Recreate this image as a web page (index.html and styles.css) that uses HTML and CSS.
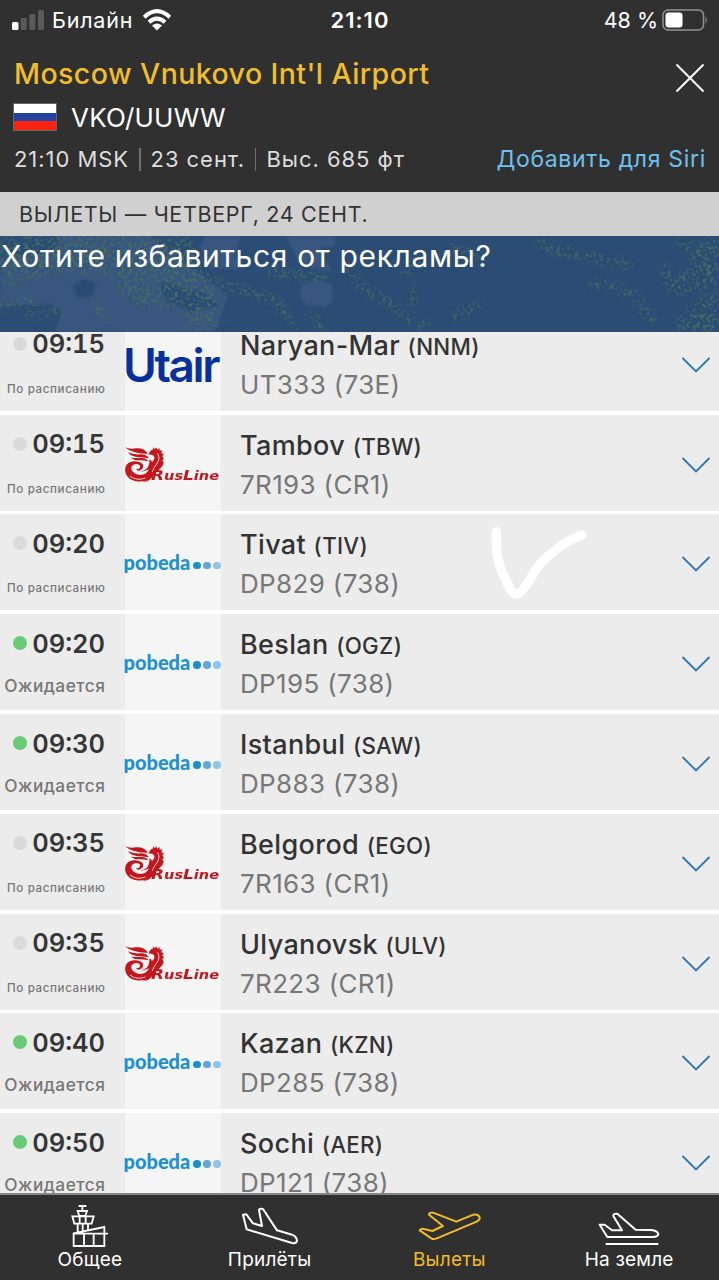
FILE: index.html
```html
<!DOCTYPE html>
<html lang="ru">
<head>
<meta charset="utf-8">
<title>Moscow Vnukovo Int'l Airport</title>
<link rel="stylesheet" href="styles.css">
</head>
<body>
<svg class="defs" width="0" height="0" aria-hidden="true">
  <symbol id="chevron" viewBox="0 0 30 18"><path d="M1.500 2L15 15.500L28.500 2" fill="none" stroke="#2d77b5" stroke-width="1.900"/></symbol>
  <symbol id="bird" viewBox="12 34 126 110">
    <path fill="#c4161c" d="M15 38Q28 44 48 41Q70 38 84 57Q60 58 42 52Q24 47 15 38ZM24 53Q40 61 62 59Q78 58 87 71Q68 68 50 67Q32 65 24 53ZM32 69Q52 71 66 70Q80 71 86 80Q68 76 56 77Q42 77 32 69Z"/>
    <path fill="#c4161c" d="M46 80C22 78 10 98 18 118C28 142 64 146 90 134Q78 140 66 143C86 142 98 132 102 116C116 106 128 98 131 84L127 76L132 73L127 64L132 60L124 55L127 47L119 48L119 40L112 45L109 38L105 43L98 38L100 44Q88 48 86 60Q92 58 99 62C106 68 104 76 96 82C94 78 92 74 88 76C90 96 78 108 62 110Q74 112 86 104C82 120 60 126 44 116C28 106 32 90 48 88Q62 88 60 98Q58 106 48 102Q52 112 62 106C76 98 72 82 46 80Z"/>
    <path fill="none" stroke="#f5f5f5" stroke-width="2.500" d="M113 56Q122 72 110 88T97 112M30 124Q50 140 76 130"/>
  </symbol>
</svg>

<div class="statusbar">
  <div class="carrier">
    <svg class="signal" width="34" height="20" viewBox="0 0 34 20"><rect x="0" y="12" width="6.500" height="8" rx="1.500" fill="#fff"/><g fill="#5a5a5a"><rect x="8.700" y="8" width="6" height="12" rx="1.500"/><rect x="17.300" y="4" width="6" height="16" rx="1.500"/><rect x="26" y="0" width="6" height="20" rx="1.500"/></g></svg>
    <span class="carrier-name">Билайн</span>
    <svg class="wifi" width="30" height="22" viewBox="0 0 30 22"><g fill="none" stroke="#fff" stroke-width="4"><path d="M2.200 8.200Q15-3.800 27.800 8.200"/><path d="M7 13.200Q15 6 23 13.200"/></g><path d="M15 21.500L10 16.600Q15 12.500 20 16.600Z" fill="#fff"/></svg>
  </div>
  <span class="clock">21:10</span>
  <div class="battery"><span class="percent">48 %</span><svg width="46" height="22" viewBox="0 0 46 22"><rect x="1" y="1" width="40.500" height="20" rx="5" fill="none" stroke="#929292" stroke-width="1.500"/><rect x="3.500" y="3.500" width="17" height="15" rx="3" fill="#fff"/><path d="M43.600 7Q46 11 43.600 15Z" fill="#929292"/></svg></div>
</div>

<header class="header">
  <div class="title-row"><h1 class="title">Moscow Vnukovo Int'l Airport</h1>
    <svg class="close" width="30" height="30" viewBox="0 0 30 30"><path d="M1.500 1.500L28.500 28.500M28.500 1.500L1.500 28.500" stroke="#fff" stroke-width="2"/></svg></div>
  <div class="code-row"><span class="flag"></span><span class="codes">VKO/UUWW</span></div>
  <div class="info-row"><span>21:10 MSK</span><i class="bar"></i><span>23 сент.</span><i class="bar"></i><span>Выс. 685 фт</span><a class="siri">Добавить для Siri</a></div>
</header>

<div class="section">ВЫЛЕТЫ — ЧЕТВЕРГ, 24 СЕНТ.</div>

<div class="banner">
  <svg class="map" width="719" height="96" viewBox="0 0 719 96">
    <defs>
      <filter id="specks" x="0" y="0" width="719" height="96" filterUnits="userSpaceOnUse" color-interpolation-filters="sRGB">
        <feTurbulence type="fractalNoise" baseFrequency="0.28" numOctaves="2" seed="7" result="n"/>
        <feColorMatrix in="n" type="matrix" values="0 0 0 0 0.260 0 0 0 0 0.420 0 0 0 0 0.380 7 0 0 0 -3.500" result="s"/>
        <feGaussianBlur in="SourceGraphic" stdDeviation="3.500" result="m"/>
        <feComposite in="s" in2="m" operator="in" result="c"/>
        <feGaussianBlur in="c" stdDeviation="0.400"/>
      </filter>
      <filter id="soft"><feGaussianBlur stdDeviation="1"/></filter>
    </defs>
    <rect width="719" height="96" fill="#2b4c75"/>
    <g fill="#37577f" filter="url(#soft)">
      <path d="M0 0H150L190 30L228 60L215 96H55L62 75L50 68L0 70Z"/>
      <path d="M205 0H240L235 20L245 34L210 32L200 10ZM286 0H335V10L320 12L325 25L334 36L300 28Z"/>
      <path d="M302 48L318 44L332 48L333 64L326 71L306 69L300 60Z"/>
    </g>
    <g fill="#2b4c75" filter="url(#soft)"><path d="M0 0H60L50 18L0 22ZM72 50L85 42L96 48L92 60L78 62Z"/><path d="M160 46L200 56L220 70L190 76L165 64Z"/></g>
    <g filter="url(#specks)" fill="#000" stroke="#000" stroke-linejoin="round" stroke-linecap="round">
      <path stroke="none" d="M0 0H190L200 30L218 48L222 90L190 96L180 70L140 72L120 56L110 40L60 36L20 50L0 48Z"/>
      <path fill="none" stroke-width="9" d="M120 25L180 35L230 50L275 64L295 92M270 36L325 42M0 68L35 64L30 80M45 80L60 76M95 70L108 82M350 34L362 52L395 70L405 82L425 90M310 78L325 95M440 22L455 12L480 20M405 36L420 22M415 52L412 65M455 80L478 70M540 6L560 16L582 18L605 26L628 28M590 46L615 52L638 60L645 76L655 84M680 6L695 15M665 30L670 50"/>
      <path stroke="none" d="M688 10L719 0V96H674L680 78L700 62L719 54V48L675 60L668 45L695 30Z"/>
    </g>
  </svg>
  <span class="banner-text">Хотите избавиться от рекламы?</span>
</div>

<main class="list">
  <article class="row"><div class="when"><div class="time"><i class="dot"></i><span>09:15</span></div><div class="st small">По расписанию</div></div><div class="logo"><span class="utair">Utair</span></div><div class="dest"><div class="name">Naryan-Mar <small>(NNM)</small></div><div class="flight">UT333 (73E)</div></div><svg class="chev"><use href="#chevron"/></svg></article>
  <article class="row"><div class="when"><div class="time"><i class="dot"></i><span>09:15</span></div><div class="st small">По расписанию</div></div><div class="logo rus"><svg class="bird"><use href="#bird"/></svg><span class="rusline">R<b>us</b>L<b>ine</b></span></div><div class="dest"><div class="name">Tambov <small>(TBW)</small></div><div class="flight">7R193 (CR1)</div></div><svg class="chev"><use href="#chevron"/></svg></article>
  <article class="row"><div class="when"><div class="time"><i class="dot"></i><span>09:20</span></div><div class="st small">По расписанию</div></div><div class="logo"><span class="pobeda">pobeda</span><i class="p p1"></i><i class="p p2"></i><i class="p p3"></i></div><div class="dest"><div class="name">Tivat <small>(TIV)</small></div><div class="flight">DP829 (738)</div></div><svg class="chev"><use href="#chevron"/></svg>
    <svg class="mark" width="110" height="90" viewBox="0 13 330 270"><path d="M49 66C50 110 47 130 56 157C65 190 80 215 91 240Q110 268 130 238C150 212 166 178 188 155C220 122 252 96 305 76" fill="none" stroke="#fff" stroke-width="28" stroke-linecap="round"/></svg></article>
  <article class="row"><div class="when"><div class="time"><i class="dot on"></i><span>09:20</span></div><div class="st">Ожидается</div></div><div class="logo"><span class="pobeda">pobeda</span><i class="p p1"></i><i class="p p2"></i><i class="p p3"></i></div><div class="dest"><div class="name">Beslan <small>(OGZ)</small></div><div class="flight">DP195 (738)</div></div><svg class="chev"><use href="#chevron"/></svg></article>
  <article class="row"><div class="when"><div class="time"><i class="dot on"></i><span>09:30</span></div><div class="st">Ожидается</div></div><div class="logo"><span class="pobeda">pobeda</span><i class="p p1"></i><i class="p p2"></i><i class="p p3"></i></div><div class="dest"><div class="name">Istanbul <small>(SAW)</small></div><div class="flight">DP883 (738)</div></div><svg class="chev"><use href="#chevron"/></svg></article>
  <article class="row"><div class="when"><div class="time"><i class="dot"></i><span>09:35</span></div><div class="st small">По расписанию</div></div><div class="logo rus"><svg class="bird"><use href="#bird"/></svg><span class="rusline">R<b>us</b>L<b>ine</b></span></div><div class="dest"><div class="name">Belgorod <small>(EGO)</small></div><div class="flight">7R163 (CR1)</div></div><svg class="chev"><use href="#chevron"/></svg></article>
  <article class="row"><div class="when"><div class="time"><i class="dot"></i><span>09:35</span></div><div class="st small">По расписанию</div></div><div class="logo rus"><svg class="bird"><use href="#bird"/></svg><span class="rusline">R<b>us</b>L<b>ine</b></span></div><div class="dest"><div class="name">Ulyanovsk <small>(ULV)</small></div><div class="flight">7R223 (CR1)</div></div><svg class="chev"><use href="#chevron"/></svg></article>
  <article class="row"><div class="when"><div class="time"><i class="dot on"></i><span>09:40</span></div><div class="st">Ожидается</div></div><div class="logo"><span class="pobeda">pobeda</span><i class="p p1"></i><i class="p p2"></i><i class="p p3"></i></div><div class="dest"><div class="name">Kazan <small>(KZN)</small></div><div class="flight">DP285 (738)</div></div><svg class="chev"><use href="#chevron"/></svg></article>
  <article class="row"><div class="when"><div class="time"><i class="dot on"></i><span>09:50</span></div><div class="st">Ожидается</div></div><div class="logo"><span class="pobeda">pobeda</span><i class="p p1"></i><i class="p p2"></i><i class="p p3"></i></div><div class="dest"><div class="name">Sochi <small>(AER)</small></div><div class="flight">DP121 (738)</div></div><svg class="chev"><use href="#chevron"/></svg></article>
</main>

<nav class="tabs">
  <div class="tab"><svg width="66" height="44" viewBox="170 70 198 132"><g fill="none" stroke="#fff" stroke-width="5.500"><path d="M235 79H258M246 79V95M232 94H260L255 109H237ZM216 110H280L274 132H222ZM238 110V132M256 110V132M232 132V160M263 132V152M247 132V160M220 161L312 142V199H220ZM220 162H323M251 162V199M280 162V199"/></g></svg><span class="tl">Общее</span></div>
  <div class="tab"><svg width="66" height="44" viewBox="710 70 198 132"><path d="M728 105L738 104L758 131L785 139L776 91Q776 86 788 88L830 152L875 165Q890 171 890 184Q888 192 875 190L739 149Z" fill="none" stroke="#fff" stroke-width="6" stroke-linejoin="round"/></svg><span class="tl">Прилёты</span></div>
  <div class="tab active"><svg width="66" height="44" viewBox="168 70 198 132"><path d="M207 105Q207 98 219 99L289 126L340 105Q354 102 359 113Q360 121 350 126L236 174Q222 181 214 176L179 152Q184 145 195 149L217 154L249 139Z" fill="none" stroke="#f0bd28" stroke-width="6" stroke-linejoin="round"/></svg><span class="tl">Вылеты</span></div>
  <div class="tab"><svg width="66" height="44" viewBox="708 70 198 132"><path d="M719 135L734 135L756 152H786L760 109Q759 101 772 102L827 150L873 151Q894 153 895 164Q893 172 879 172H742ZM737 193H895" fill="none" stroke="#fff" stroke-width="6" stroke-linejoin="round"/></svg><span class="tl">На земле</span></div>
</nav>
</body>
</html>
```
FILE: styles.css
```css
* { box-sizing: border-box; }
body { margin: 0; width: 719px; height: 1280px; overflow: hidden; display: flex; flex-direction: column; background: #303030; font-family: Inter, "Noto Sans", sans-serif; color: #fff; white-space: nowrap; }
svg { display: block; flex: none; }
.defs { position: absolute; }

.statusbar { height: 40px; padding: 0 11px 0 12px; display: grid; grid-template-columns: 1fr auto 1fr; align-items: center; font-size: 21.5px; line-height: 40px; }
.carrier { display: flex; align-items: center; }
.carrier-name { letter-spacing: .8px; }
.signal { margin-right: 6px; }
.wifi { margin-left: 8.500px; }
.clock { font-size: 22px; font-weight: 600; letter-spacing: 1px; }
.battery { display: flex; align-items: center; justify-content: flex-end; gap: 4px; }

.header { height: 152px; padding: 14px 14px 0; display: flex; flex-direction: column; }
.title-row { display: flex; justify-content: space-between; height: 40px; }
.title { margin: 0; font-size: 28.5px; font-weight: 500; line-height: 40px; letter-spacing: .43px; color: #f0bd2c; }
.close { margin-top: 9px; }
.code-row { display: flex; align-items: center; height: 46px; gap: 14px; }
.flag { width: 44px; height: 28px; margin-left: -1px; border: 1px solid #666; background: linear-gradient(#fff 33%, #2342a0 33% 66%, #fb2410 66%); }
.codes { font-size: 26px; letter-spacing: .2px; }
.info-row { display: flex; align-items: center; height: 38px; font-size: 22px; letter-spacing: .95px; color: #dedede; }
.bar { width: 1.5px; height: 23px; margin: 0 10px; background: #707070; }
.siri { margin-left: auto; margin-right: -1px; color: #6fc0ea; font-size: 23px; letter-spacing: .68px; }

.section { height: 44px; padding-left: 19px; line-height: 45px; font-size: 21.5px; letter-spacing: .68px; background: #d0d0d0; color: #333; }
.banner { height: 96px; position: relative; overflow: hidden; background: #2b4c75; }
.map { position: absolute; inset: 0; }
.banner-text { position: relative; display: block; line-height: 40px; font-size: 30px; letter-spacing: .65px; padding-left: 1px; }

.list { flex: none; height: 861px; overflow: hidden; background: #fff; display: flex; flex-direction: column; gap: 3.8px; }
.row { flex: none; height: 96px; display: grid; grid-template-columns: 105px 96px 1fr 30px; column-gap: 19.5px; padding-right: 8px; background: #ececec; position: relative; }
.row:first-child { margin-top: -17.200px; }
.when { padding-top: 14px; text-align: right; }
.time { display: flex; justify-content: flex-end; align-items: center; height: 30px; font-size: 25.5px; font-weight: 600; font-variant-numeric: tabular-nums; color: #363636; }
.time span { width: 74px; display: flex; justify-content: flex-end; }
.dot { width: 14px; height: 14px; border-radius: 50%; background: #dadada; margin-right: 4px; }
.dot.on { background: #68cb75; }
.st { height: 30px; line-height: 30px; margin: 13px -.5px 0 0; font-size: 17.300px; letter-spacing: .5px; font-weight: 500; color: #777; }
.st.small { margin-top: 15px; font-size: 11.600px; letter-spacing: .62px; }
.logo { background: #f5f5f5; display: flex; align-items: center; }
.utair { font-size: 46px; font-weight: 600; letter-spacing: -2.4px; color: #08309a; line-height: 60px; padding-top: 4px; margin-left: -1.500px; }
.pobeda { width: 69px; margin-left: -1px; margin-right: 1px; font: 900 20px/24px Lato, sans-serif; color: #2090cf; }
.p { flex: none; width: 7.500px; height: 7.500px; border-radius: 50%; margin: 6px 2.400px 0 0; }
.p1 { background: #1c8fcb; } .p2 { background: #62a6da; } .p3 { background: #92c4e8; margin-right: 0; }
.rus { align-items: flex-start; }
.bird { width: 42px; height: 36.700px; margin: 31.500px 0 0 -0.500px; }
.rusline { margin: 51px 0 0 -15px; font: italic bold 14px/18px "DejaVu Sans", sans-serif; color: #c4161c; transform: scaleX(1.21); transform-origin: left; }
.rusline b { font-size: 12px; }
.dest { padding-top: 11px; }
.name { height: 40px; line-height: 40px; font-size: 27px; font-weight: 500; letter-spacing: .35px; color: #333; }
.name small { font-size: 22.300px; letter-spacing: .3px; }
.flight { height: 38px; line-height: 38px; font-size: 26px; letter-spacing: .35px; color: #777; }
.chev { width: 30px; height: 18px; margin-top: 41px; }
.mark { position: absolute; left: 480px; top: 0; }

.tabs { flex: none; height: 87px; border-top: 2.500px solid #858585; display: grid; grid-template-columns: repeat(4, 1fr); }
.tab { display: flex; flex-direction: column; align-items: center; padding-top: 8px; }
.tl { font-size: 19px; line-height: 24px; margin-top: 1px; letter-spacing: .2px; }
.active { color: #f0bd28; }
```
